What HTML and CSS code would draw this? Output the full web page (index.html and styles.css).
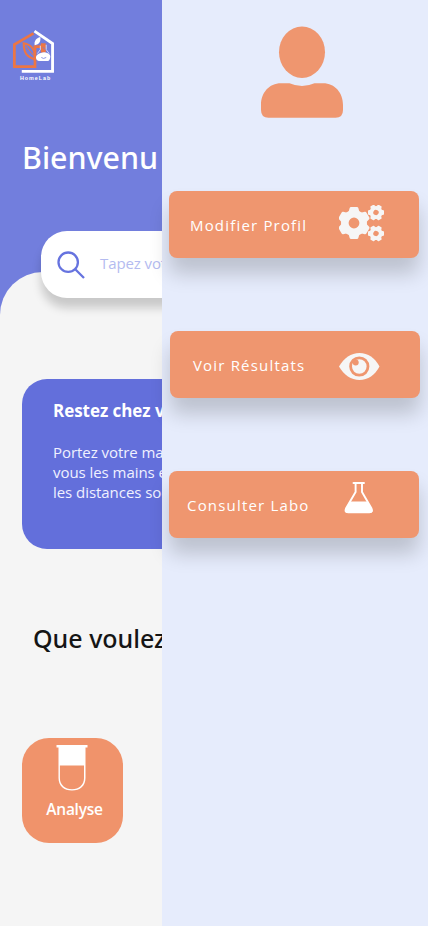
FILE: index.html
```html
<!DOCTYPE html>
<html lang="fr">
<head>
<meta charset="utf-8">
<title>HomeLab</title>
<link rel="stylesheet" href="styles.css">
</head>
<body>
<div class="app">
  <main class="page">
    <header class="top">
      <svg class="logo" width="43" height="53" viewBox="0 0 44 54">
        <path d="M22 4.300L2.400 15.700V38.500H23.500V17.800H34" fill="none" stroke="#ec7644" stroke-width="2.800"/>
        <path d="M23 2L41.500 14.700V43.200H10" fill="none" stroke="#fff" stroke-width="2.900"/>
        <path d="M23.500 31C15.500 28.500 12 24.500 12 14.500C20 16 24 20.500 23.500 31Z" fill="none" stroke="#ec7644" stroke-width="2.200"/>
        <path d="M14 17L22 27" stroke="#ec7644" stroke-width="1"/>
        <path d="M23.200 16.500C22.500 12 24.500 9.500 29 8C29.500 13 28 15.500 23.200 16.500Z" fill="#fff"/>
        <path d="M29.500 14.500H34.500V24H29.500Z" fill="#ec7644"/>
        <path d="M24.500 28.500Q25.500 25.500 29.500 24.500Q33 23 36 24.500Q40 26 39 29.500Q38.500 32.700 36 32.700H27.500Q24.500 32 24.500 28.500Z" fill="#fff"/>
        <path d="M30 29Q32 31 35 29" fill="none" stroke="#727edd" stroke-width=".8"/>
        <path d="M35 16V21L38 25M29 17V21L26 25" fill="none" stroke="#dfe2fb" stroke-width=".9"/>
        <path d="M31.500 18.500L34 21" stroke="#727edd" stroke-width="1"/>
        <text x="8.200" y="52.300" class="logo-name" textLength="31">HomeLab</text>
      </svg>
      <h1 class="welcome">Bienvenu</h1>
    </header>
    <section class="sheet">
      <div class="search">
        <svg width="28" height="28" viewBox="0 0 28 28" fill="none" stroke="#6673df" stroke-width="2.300"><circle cx="11.200" cy="11.200" r="9.700"/><path d="M18 18L27 27"/></svg>
        <span class="hint">Tapez votre recherche</span>
      </div>
      <article class="notice">
        <h2 class="notice-title">Restez chez vous</h2>
        <p class="notice-text">Portez votre masque, lavez<br>vous les mains et respectez<br>les distances sociales</p>
      </article>
      <h2 class="question">Que voulez-vous</h2>
      <div class="tile">
        <svg class="tube" width="32" height="46" viewBox="0 0 32 46"><path d="M.500 0H31.500V2.500H29.500V33C29.500 41 24 45.500 16 45.500S2.500 41 2.500 33V2.500H.500Z" fill="#fff"/><path d="M3.900 20.500H28V33C28 40 23 44.200 16 44.200S3.900 40 3.900 33Z" fill="#f0936b"/></svg>
        <span class="tile-label">Analyse</span>
      </div>
    </section>
  </main>
  <aside class="drawer">
    <svg class="avatar" width="82" height="92" viewBox="0 0 82 92" fill="#ef966f"><ellipse cx="41" cy="26.200" rx="23" ry="25.700"/><path d="M20 57.300H28.500Q41 62.800 53.500 57.300H62C74 57.300 82 67 82 79V84Q82 91.800 74.500 91.800H7.500Q0 91.800 0 84V79C0 67 8 57.300 20 57.300Z"/></svg>
    <nav class="menu">
      <a class="item">
        <span class="label profile">Modifier Profil</span>
        <svg class="icon gears" width="46" height="37" viewBox="0 0 46 37">
          <defs><g id="gear"><circle r="9.200" fill="none" stroke="#f6f6f6" stroke-width="7.600"/><path id="tooth" d="M-5.500 -11L-4.300 -15Q-4 -16 -3 -16H3Q4 -16 4.300 -15L5.500 -11Z" fill="#f6f6f6"/><use href="#tooth" transform="rotate(60)"/><use href="#tooth" transform="rotate(120)"/><use href="#tooth" transform="rotate(180)"/><use href="#tooth" transform="rotate(240)"/><use href="#tooth" transform="rotate(300)"/></g></defs>
          <use href="#gear" transform="translate(15 18)"/>
          <use href="#gear" transform="translate(37 7.500) rotate(30) scale(.5)"/>
          <use href="#gear" transform="translate(37 28.500) rotate(30) scale(.5)"/>
        </svg>
      </a>
      <a class="item shifted">
        <span class="label results">Voir Résultats</span>
        <svg class="icon eye" width="41" height="28" viewBox="0 0 41 28"><path d="M0 13.500C5 5 12 0 20.500 0S36 5 40.500 13.500C36 22 29 27 20.500 27S5 22 0 13.500Z" fill="#f6f6f6"/><circle cx="20.300" cy="13.500" r="8.700" fill="#f6f6f6" stroke="#ef966f" stroke-width="2.800"/><circle cx="16.700" cy="9.500" r="3" fill="#ef966f"/></svg>
      </a>
      <a class="item">
        <span class="label labo">Consulter Labo</span>
        <svg class="icon flask" width="30" height="32" viewBox="0 0 30 32"><path d="M9.500 1H20M11.600 1V10L2 26.500Q.500 30.300 4 30.300H25.500Q29 30.300 27.500 26.500L18 10V1" fill="none" stroke="#fff" stroke-width="1.900" stroke-linecap="round"/><path d="M6 19.500H23.500L28 27Q29.500 31 26 31H4Q0 31 1.500 27Z" fill="#fff"/></svg>
      </a>
    </nav>
  </aside>
</div>
</body>
</html>
```

FILE: styles.css
```css
* { box-sizing: border-box; }
body { margin: 0; font-family: "Open Sans", "Noto Sans", sans-serif; }
h1, h2, p { margin: 0; }
svg { display: block; flex: none; }
.app { display: flex; width: 428px; height: 926px; overflow: hidden; }
.page { width: 162px; height: 926px; overflow: hidden; background: #727edd; white-space: nowrap; }
.top { height: 272px; padding: 29px 0 0 12px; }
.logo-name { font: bold 5.500px "Liberation Sans", sans-serif; fill: #fff; }
.welcome { margin: 55px 0 0 10px; font-family: "Noto Sans", sans-serif; font-size: 30.400px; line-height: 42px; font-weight: 500; color: #fff; }
.sheet { width: 428px; height: 654px; background: #f5f5f5; border-radius: 43px 43px 0 0; display: flow-root; }
.search { display: flex; align-items: center; width: 346px; height: 67px; margin: -41px 0 0 41px; padding-left: 16px; background: #fff; border-radius: 26px; box-shadow: 0 10px 10px rgba(0,0,0,.18); }
.hint { margin: -4px 0 0 15px; font-size: 15px; letter-spacing: -.1px; color: #b4bbf0; }
.notice { width: 384px; height: 170px; margin: 81px 0 0 22px; padding: 20px 31px; border-radius: 25px; background: #636fdb; color: #fff; }
.notice-title { font-size: 17px; line-height: 24px; font-weight: 700; letter-spacing: -.05px; }
.notice-text { margin-top: 19px; font-size: 15px; line-height: 20px; letter-spacing: -.05px; color: #f0f1ff; }
.question { margin: 71px 0 0 33px; font-family: "Noto Sans", sans-serif; font-size: 25px; line-height: 36px; font-weight: 500; color: #151515; }
.tile { display: flex; flex-direction: column; align-items: center; width: 101px; height: 105px; margin: 82px 0 0 22px; padding-top: 7px; border-radius: 27px; background: #f0936b; color: #fff; }
.tube { margin-right: 1px; }
.tile-label { margin-top: 7px; padding-left: 4px; font-size: 15.500px; line-height: 22px; font-weight: 600; letter-spacing: -.25px; }
.drawer { position: relative; width: 266px; height: 926px; padding: 26px 0 0 7px; background: #e6ecfc; }
.avatar { margin-left: 92px; }
.menu { display: flex; flex-direction: column; gap: 73px; margin-top: 73px; }
.item { display: flex; width: 250px; height: 67px; border-radius: 8px; background: #ef966f; box-shadow: 0 16px 20px rgba(0,0,0,.18); color: #fff; }
.shifted { margin-left: 1px; }
.label { width: 149px; line-height: 69px; font-size: 15px; letter-spacing: 1.180px; white-space: nowrap; }
.profile { margin-left: 21px; }
.results { margin-left: 23px; }
.labo { margin-left: 18px; }
.gears { margin-top: 14px; }
.eye { margin: 22px 0 0 -3px; }
.flask { margin: 11px 0 0 8px; }
```
